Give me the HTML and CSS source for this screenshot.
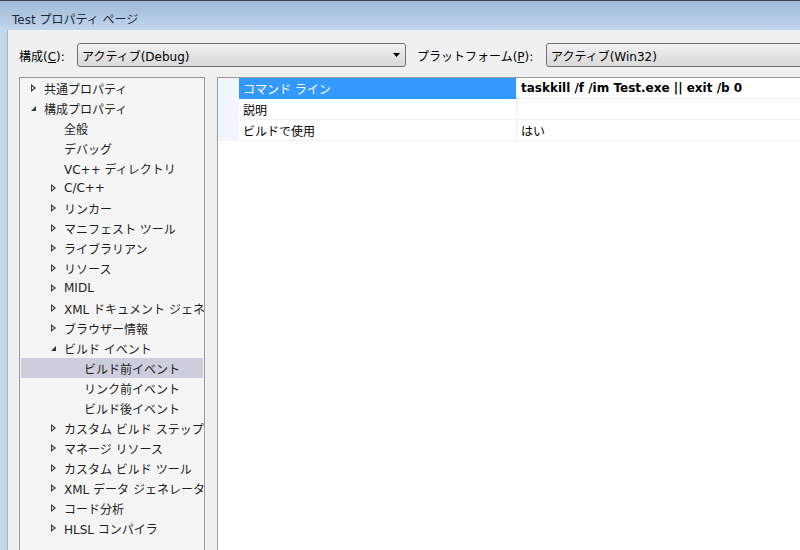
FILE: index.html
```html
<!DOCTYPE html>
<html lang="ja">
<head>
    <meta charset="UTF-8">
    <title>Test プロパティ ページ</title>
    <link rel="stylesheet" href="styles.css">
</head>
<body>
    <div class="window">
        <div class="titlebar">Test プロパティ ページ</div>
        <div class="frame">
            <div class="client">
                <div class="toolbar">
                    <span class="label">構成(<u>C</u>):</span>
                    <div class="combo combo-config">
                        <span>アクティブ(Debug)</span>
                        <svg class="combo-arrow" width="7" height="4" viewBox="0 0 7 4"><path d="M0 0h7L3.5 4z" fill="#000"/></svg>
                    </div>
                    <span class="label label-platform">プラットフォーム(<u>P</u>):</span>
                    <div class="combo combo-platform">
                        <span>アクティブ(Win32)</span>
                    </div>
                </div>

                <div class="panels">
                    <div class="tree">
                        <div class="node lvl0"><span class="arrow closed"></span>共通プロパティ</div>
                        <div class="node lvl0"><span class="arrow open"></span>構成プロパティ</div>
                        <div class="node lvl1"><span class="arrow"></span>全般</div>
                        <div class="node lvl1"><span class="arrow"></span>デバッグ</div>
                        <div class="node lvl1"><span class="arrow"></span>VC++ ディレクトリ</div>
                        <div class="node lvl1"><span class="arrow closed"></span>C/C++</div>
                        <div class="node lvl1"><span class="arrow closed"></span>リンカー</div>
                        <div class="node lvl1"><span class="arrow closed"></span>マニフェスト ツール</div>
                        <div class="node lvl1"><span class="arrow closed"></span>ライブラリアン</div>
                        <div class="node lvl1"><span class="arrow closed"></span>リソース</div>
                        <div class="node lvl1"><span class="arrow closed"></span>MIDL</div>
                        <div class="node lvl1"><span class="arrow closed"></span>XML ドキュメント ジェネレーター</div>
                        <div class="node lvl1"><span class="arrow closed"></span>ブラウザー情報</div>
                        <div class="node lvl1"><span class="arrow open"></span>ビルド イベント</div>
                        <div class="node lvl2 selected"><span class="arrow"></span>ビルド前イベント</div>
                        <div class="node lvl2"><span class="arrow"></span>リンク前イベント</div>
                        <div class="node lvl2"><span class="arrow"></span>ビルド後イベント</div>
                        <div class="node lvl1"><span class="arrow closed"></span>カスタム ビルド ステップ</div>
                        <div class="node lvl1"><span class="arrow closed"></span>マネージ リソース</div>
                        <div class="node lvl1"><span class="arrow closed"></span>カスタム ビルド ツール</div>
                        <div class="node lvl1"><span class="arrow closed"></span>XML データ ジェネレーター ツール</div>
                        <div class="node lvl1"><span class="arrow closed"></span>コード分析</div>
                        <div class="node lvl1"><span class="arrow closed"></span>HLSL コンパイラ</div>
                    </div>

                    <div class="props">
                        <div class="prop">
                            <div class="gutter"></div>
                            <div class="name active">コマンド ライン</div>
                            <div class="value bold">taskkill /f /im Test.exe || exit /b 0</div>
                        </div>
                        <div class="prop">
                            <div class="gutter"></div>
                            <div class="name">説明</div>
                            <div class="value"></div>
                        </div>
                        <div class="prop">
                            <div class="gutter"></div>
                            <div class="name">ビルドで使用</div>
                            <div class="value">はい</div>
                        </div>
                    </div>
                </div>
            </div>
        </div>
    </div>
</body>
</html>
```

FILE: styles.css
```css
body {
    margin: 0;
    font-family: "DejaVu Sans", "Noto Sans CJK JP", sans-serif;
    font-size: 12px;
    color: #000;
    background: #c4d8ed;
}
.window {
    width: 800px;
    height: 550px;
    display: flex;
    flex-direction: column;
    overflow: hidden;
}
.titlebar {
    height: 30px;
    box-sizing: border-box;
    border-top: 1px solid #3c4652;
    padding: 0 0 3px 12px;
    display: flex;
    align-items: flex-end;
    color: #1b2a3a;
    background: linear-gradient(#9fbad8, #c2d6ec);
}
.frame {
    flex: 1;
    display: flex;
    padding-left: 7px;
    background: #c4d8ed;
    min-height: 0;
}
.client {
    flex: 1;
    display: flex;
    flex-direction: column;
    background: #f0f0f0;
    border-left: 1px solid #a3b7ce;
    padding: 13px 0 0 11px;
    min-width: 0;
}
.toolbar {
    height: 24px;
    display: flex;
    align-items: center;
}
.label {
    width: 58px;
    flex-shrink: 0;
    white-space: nowrap;
}
.label-platform {
    width: 129px;
    margin-left: 11px;
}
.combo {
    height: 22px;
    flex-shrink: 0;
    border: 1px solid #707070;
    border-radius: 3px;
    background: linear-gradient(#f3f3f3, #e3e3e3 50%, #dadada);
    display: flex;
    align-items: center;
    padding-left: 4px;
    white-space: nowrap;
}
.combo-config {
    width: 321px;
    justify-content: space-between;
    padding-right: 2px;
}
.combo-arrow {
    margin-right: 3px;
}
.combo-platform {
    width: 300px;
}
.panels {
    margin-top: 10px;
    display: flex;
    flex: 1;
    min-height: 0;
}
.tree {
    width: 182px;
    flex-shrink: 0;
    border: 1px solid #9a9a9a;
    border-bottom: none;
    background: #f5f5f5;
    padding: 0 1px;
    overflow: hidden;
}
.node {
    height: 20px;
    display: flex;
    align-items: center;
    white-space: nowrap;
    color: #1e1e1e;
}
.node.selected {
    background: #cccedb;
}
.lvl0 { padding-left: 9px; }
.lvl1 { padding-left: 29px; }
.lvl2 { padding-left: 49px; }
.arrow {
    width: 14px;
    height: 20px;
    flex-shrink: 0;
    position: relative;
}
.arrow.closed::before {
    content: "";
    position: absolute;
    left: 1px;
    top: 6px;
    border-left: 5px solid #333;
    border-top: 4.5px solid transparent;
    border-bottom: 4.5px solid transparent;
}
.arrow.closed::after {
    content: "";
    position: absolute;
    left: 2px;
    top: 8px;
    border-left: 2.5px solid #f5f5f5;
    border-top: 2.5px solid transparent;
    border-bottom: 2.5px solid transparent;
}
.arrow.open::before {
    content: "";
    position: absolute;
    left: 1px;
    top: 8px;
    border-right: 5px solid #333;
    border-top: 5px solid transparent;
}
.props {
    flex: 1;
    margin-left: 12px;
    border: 1px solid #9a9a9a;
    border-right: none;
    border-bottom: none;
    background: #fff;
    min-width: 600px;
}
.prop {
    display: grid;
    grid-template-columns: 21px 278px 1fr;
    height: 21px;
}
.gutter {
    background: #f2f5fb;
}
.name,
.value {
    display: flex;
    align-items: center;
    border-bottom: 1px solid #f0f0f5;
    white-space: nowrap;
}
.name {
    padding-left: 4px;
    border-right: 1px solid #f0f0f5;
}
.name.active {
    background: #3399ff;
    color: #fff;
    border-bottom-color: #3399ff;
}
.value {
    padding-left: 4px;
}
.value.bold {
    font-weight: bold;
}
```
